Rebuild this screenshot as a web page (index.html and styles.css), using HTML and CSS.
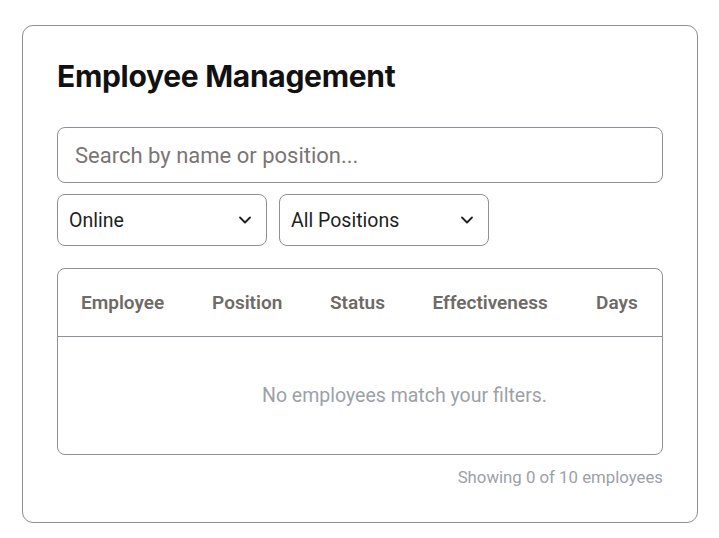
FILE: index.html
```html
<!DOCTYPE html>
<html lang="en">
<head>
<meta charset="utf-8">
<title>Employee Management</title>
<link rel="stylesheet" href="styles.css">
</head>
<body>
<div class="card">
  <h1 class="title">Employee Management</h1>
  <div class="search">Search by name or position...</div>
  <div class="filters">
    <div class="select">
      <span>Online</span>
      <svg class="chev" width="14" height="8" viewBox="0 0 14 8"><path d="M2 1.5l5 5 5-5" fill="none" stroke="#1f1f1f" stroke-width="1.8" stroke-linecap="round" stroke-linejoin="round"/></svg>
    </div>
    <div class="select">
      <span>All Positions</span>
      <svg class="chev" width="14" height="8" viewBox="0 0 14 8"><path d="M2 1.5l5 5 5-5" fill="none" stroke="#1f1f1f" stroke-width="1.8" stroke-linecap="round" stroke-linejoin="round"/></svg>
    </div>
  </div>
  <div class="table-wrap">
    <table class="table">
      <thead>
        <tr>
          <th>Employee</th>
          <th>Position</th>
          <th>Status</th>
          <th>Effectiveness</th>
          <th>Days</th>
        </tr>
      </thead>
      <tbody>
        <tr><td colspan="5" class="empty">No employees match your filters.</td></tr>
      </tbody>
    </table>
  </div>
  <div class="footer">Showing 0 of 10 employees</div>
</div>
</body>
</html>
```

FILE: styles.css
```css
* { box-sizing: border-box; }
html, body { margin: 0; background: #fff; }
body {
  padding: 25px 21px 0 22px;
  font-family: Roboto, "Liberation Sans", sans-serif;
  color: #1f1f1f;
}
.card {
  border: 1px solid #8d9096;
  border-radius: 11px;
  padding: 30px 34px 32px 34px;
  height: 498px;
}
.title {
  font-family: Inter, Roboto, sans-serif;
  font-weight: 700;
  font-size: 30px;
  letter-spacing: -0.3px;
  line-height: 40px;
  margin: 0 0 31px 0;
  color: #111;
}
.search {
  height: 56px;
  border: 1px solid #8d9096;
  border-radius: 8px;
  padding: 0 17px;
  display: flex;
  align-items: center;
  font-size: 22px;
  color: #7a7573;
}
.filters {
  display: flex;
  gap: 12px;
  margin-top: 11px;
}
.select {
  width: 210px;
  height: 52px;
  border: 1px solid #8d9096;
  border-radius: 8px;
  padding: 0 14px 0 11px;
  display: flex;
  align-items: center;
  justify-content: space-between;
  font-size: 19.5px;
  color: #1f1f1f;
}
.chev { display: block; }
.table-wrap {
  margin-top: 22px;
  border: 1px solid #8d9096;
  border-radius: 8px;
  overflow: hidden;
}
.table {
  width: 100%;
  border-collapse: collapse;
}
.table th {
  font-weight: 600;
  font-size: 19px;
  color: #6e6a66;
  text-align: left;
  padding: 0 23px;
  height: 67px;
  border-bottom: 1px solid #8d9096;
  white-space: nowrap;
}
.empty {
  height: 118px;
  text-align: center;
  font-size: 19.5px;
  color: #9ca1a8;
  padding-left: 90px;
}
.footer {
  margin-top: 12px;
  text-align: right;
  font-size: 16.8px;
  color: #9ca1a8;
}
```
